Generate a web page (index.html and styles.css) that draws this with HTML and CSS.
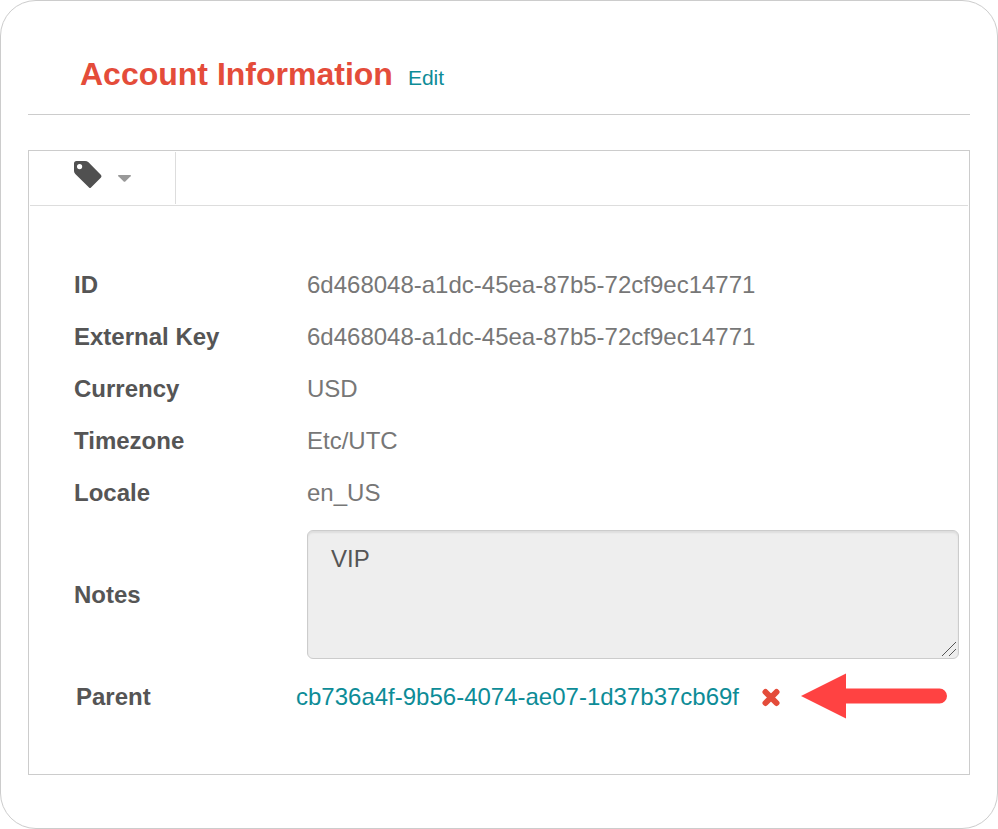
FILE: index.html
```html
<!DOCTYPE html>
<html lang="en">
<head>
<meta charset="utf-8">
<title>Account Information</title>
<link rel="stylesheet" href="styles.css">
</head>
<body>
<main class="card">
  <header class="heading">
    <h1>Account Information</h1>
    <a class="edit" href="#edit">Edit</a>
  </header>
  <section class="panel">
    <div class="toolbar">
      <button class="tag-button" type="button" aria-label="Tags">
        <svg class="tag" viewBox="0 0 28 28" aria-hidden="true"><path fill-rule="evenodd" d="M2.500 0H11Q13 0 14.500 1.300L27 14Q28 15.200 27 16.400L17 26.400Q16 27.400 15 26.400L1.300 13Q0 11.500 0 10V2.500Q0 0 2.500 0ZM5.600 3A2.600 2.600 0 1 0 5.600 8.200A2.600 2.600 0 1 0 5.600 3Z"/></svg>
        <svg class="caret" viewBox="0 0 13 7" aria-hidden="true"><path d="M0.500 0H12.500Q13.300 0.400 12.600 1.200L7.300 6.500Q6.500 7.200 5.700 6.500L0.400 1.200Q-0.300 0.400 0.500 0Z"/></svg>
      </button>
    </div>
    <dl class="details">
      <div class="row"><dt>ID</dt><dd>6d468048-a1dc-45ea-87b5-72cf9ec14771</dd></div>
      <div class="row"><dt>External Key</dt><dd>6d468048-a1dc-45ea-87b5-72cf9ec14771</dd></div>
      <div class="row"><dt>Currency</dt><dd>USD</dd></div>
      <div class="row"><dt>Timezone</dt><dd>Etc/UTC</dd></div>
      <div class="row"><dt>Locale</dt><dd>en_US</dd></div>
      <div class="row notes-row"><dt><label for="notes">Notes</label></dt><dd><textarea id="notes" readonly>VIP</textarea><svg class="grip" viewBox="0 0 16 16" aria-hidden="true"><path d="M1 15L15 1M8 15L15 8"/></svg></dd></div>
      <div class="row parent-row"><dt>Parent</dt><dd><a href="#parent">cb736a4f-9b56-4074-ae07-1d37b37cb69f</a><button class="remove" type="button" aria-label="Remove parent"><svg viewBox="0 0 18 18" aria-hidden="true"><path d="M3.500 4L9 9.500L14.500 4M3.500 15L9 9.500L14.500 15"/></svg></button><svg class="arrow" viewBox="0 0 146 46" aria-hidden="true"><path d="M0 22L45 -0.500V14.500H138.500A7.500 7.500 0 0 1 138.500 29.500H45V44.500Z"/></svg></dd></div>
    </dl>
  </section>
</main>
</body>
</html>
```
FILE: styles.css
```css
* { box-sizing: border-box; }
body { margin: 0; background: #fff; color: #777; font: 24px/30px "Liberation Sans", Arial, sans-serif; }
.card { min-height: 100vh; padding: 34px 27px 53px; border: 1px solid #ccc; border-radius: 36px; }
.heading { display: flex; align-items: baseline; gap: 15px; height: 80px; padding: 20px 52px; border-bottom: 1px solid #ccc; }
h1 { margin: 0; color: #e44c3a; font-size: 32px; line-height: 38px; }
a { color: #0d8c97; text-decoration: none; }
.edit { font-size: 21px; }
.panel { margin-top: 35px; padding-bottom: 54px; border: 1px solid #ccc; }
.toolbar { display: flex; height: 54px; margin: 1px 1px 0; padding-bottom: 1px; border-bottom: 1px solid #ddd; }
.tag-button { display: flex; align-items: center; gap: 16px; width: 146px; padding: 0 0 6px 44px; border: 0; border-right: 1px solid #ddd; background: none; }
.tag { width: 28px; height: 28px; fill: #505050; }
.caret { width: 13px; height: 7px; margin-top: 7px; fill: #999; }
.details { margin: 0; padding: 53px 10px 0 45px; }
.row { display: grid; grid-template-columns: 233px 1fr; align-items: center; min-height: 52px; }
dt { color: #555; font-weight: bold; }
dd { position: relative; margin: 0; }
textarea { display: block; width: 100%; height: 129px; padding: 13px 23px; border: 1px solid #ccc; border-radius: 6px; background: #eee; box-shadow: inset 0 2px 2px rgba(0, 0, 0, 0.07); color: #555; font: inherit; resize: none; }
.grip { position: absolute; right: 2px; bottom: 2px; width: 16px; height: 16px; fill: none; stroke: #555; }
.notes-row { padding-top: 11px; }
.parent-row { grid-template-columns: 220px 1fr; min-height: 60px; padding: 15px 0 0 2px; }
.parent-row dd { display: flex; align-items: center; }
.remove { display: flex; margin-left: 23px; padding: 0; border: 0; background: none; }
.remove svg { width: 18px; height: 18px; fill: none; stroke: #e44c3a; stroke-width: 6; stroke-linecap: round; overflow: visible; }
.arrow { width: 146px; height: 46px; margin-left: 21px; fill: #ff4242; overflow: visible; }
```
